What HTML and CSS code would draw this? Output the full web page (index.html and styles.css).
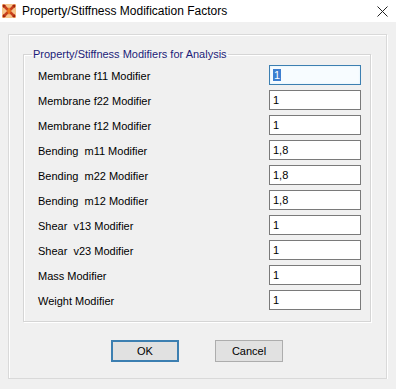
FILE: index.html
```html
<!DOCTYPE html>
<html lang="en">
<head>
<meta charset="UTF-8">
<title>Property/Stiffness Modification Factors</title>
<link rel="stylesheet" href="styles.css">
</head>
<body>
<div class="titlebar">
  <svg class="app-icon" width="14" height="14" viewBox="0 0 14 14">
    <rect x="0" y="0" width="14" height="14" fill="#f6c48a"/>
    <path d="M1 1 L13 13 M13 1 L1 13" stroke="#c8401c" stroke-width="2.6"/>
    <path d="M7 3 L9 7 L7 11 L5 7 Z" fill="#e8731e"/>
    <path d="M1 1 L4 1 L1 4 Z M13 1 L10 1 L13 4 Z M1 13 L4 13 L1 10 Z M13 13 L10 13 L13 10 Z" fill="#a0240e"/>
  </svg>
  <span class="title">Property/Stiffness Modification Factors</span>
  <svg class="close" width="11" height="11" viewBox="0 0 11 11">
    <path d="M0.5 0.5 L10.5 10.5 M10.5 0.5 L0.5 10.5" stroke="#222" stroke-width="1"/>
  </svg>
</div>
<div class="frame">
  <fieldset class="group">
    <legend>Property/Stiffness Modifiers for Analysis</legend>
    <div class="row"><span class="label">Membrane f11 Modifier</span><div class="field focused"><span class="sel">1</span></div></div>
    <div class="row"><span class="label">Membrane f22 Modifier</span><div class="field">1</div></div>
    <div class="row"><span class="label">Membrane f12 Modifier</span><div class="field">1</div></div>
    <div class="row"><span class="label">Bending &nbsp;m11 Modifier</span><div class="field">1,8</div></div>
    <div class="row"><span class="label">Bending &nbsp;m22 Modifier</span><div class="field">1,8</div></div>
    <div class="row"><span class="label">Bending &nbsp;m12 Modifier</span><div class="field">1,8</div></div>
    <div class="row"><span class="label">Shear &nbsp;v13 Modifier</span><div class="field">1</div></div>
    <div class="row"><span class="label">Shear &nbsp;v23 Modifier</span><div class="field">1</div></div>
    <div class="row"><span class="label">Mass Modifier</span><div class="field">1</div></div>
    <div class="row"><span class="label">Weight Modifier</span><div class="field">1</div></div>
  </fieldset>
  <div class="buttons">
    <button class="btn default">OK</button>
    <button class="btn">Cancel</button>
  </div>
</div>
</body>
</html>
```

FILE: styles.css
```css
body {
  margin: 0;
  background-color: #f0f0f0;
  font-family: 'Liberation Sans', Arial, sans-serif;
  font-size: 11px;
  color: #000;
}
.titlebar {
  height: 22px;
  background: #fff;
  display: flex;
  align-items: center;
}
.app-icon {
  margin-left: 2px;
  margin-right: 6px;
}
.title {
  font-size: 12px;
  color: #000;
  flex: 1;
}
.close {
  margin-right: 8px;
}
.frame {
  margin: 12px 9px 0 8px;
  height: 345px;
  box-sizing: border-box;
  border: 1px solid #d9d9d9;
  box-shadow: inset 1px 1px 0 #fff, 1px 1px 0 #fff;
  padding: 13px 15px 0 14px;
}
.group {
  margin: 0;
  border: 1px solid #d5d5d5;
  box-shadow: inset 1px 1px 0 #fff, 1px 1px 0 #fff;
  padding: 5px 9px 11px 14px;
  display: flex;
  flex-direction: column;
  gap: 5px;
}
.group legend {
  color: #1c1c78;
  padding: 0 1px;
  margin-left: -6px;
  font-size: 11px;
}
.row {
  display: flex;
  justify-content: space-between;
  align-items: flex-start;
  height: 20px;
}
.label {
  padding-top: 5px;
}
.field {
  width: 92px;
  height: 20px;
  box-sizing: border-box;
  border: 1px solid #7a7a7a;
  background: #fff;
  padding: 3px 0 0 3px;
  line-height: 13px;
}
.field.focused {
  border-color: #3c7fb1;
  background: #f7fcff;
  box-shadow: inset 0 0 2px #d6ecf8;
}
.sel {
  background: #3d7fd0;
  color: #fff;
  padding: 0 1px;
}
.buttons {
  display: flex;
  justify-content: center;
  gap: 36px;
  margin-top: 18px;
}
.btn {
  width: 68px;
  height: 22px;
  box-sizing: border-box;
  background: #e1e1e1;
  border: 1px solid #adadad;
  font-family: 'Liberation Sans', Arial, sans-serif;
  font-size: 11px;
  color: #000;
  padding: 0;
}
.btn.default {
  border: 2px solid #3c7fb1;
}
```
